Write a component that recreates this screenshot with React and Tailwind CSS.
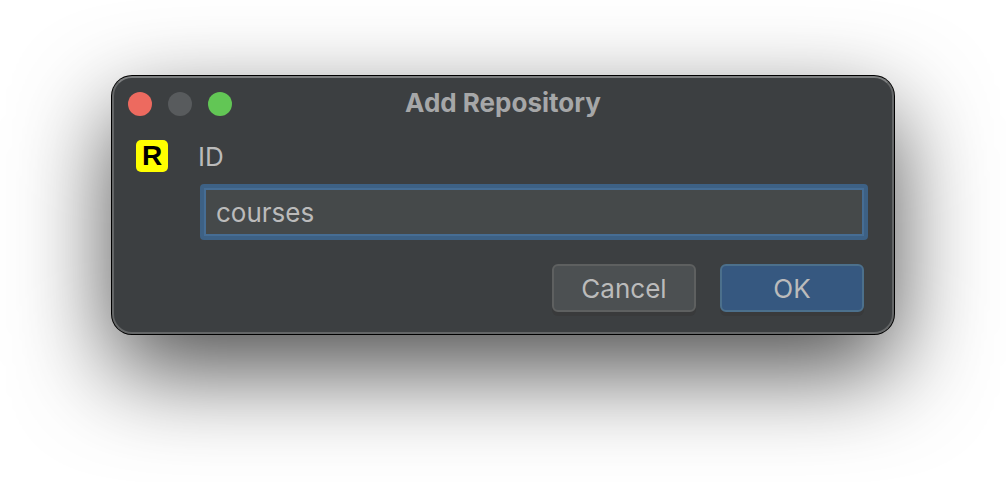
import { useState } from "react";

const lights = [
  { label: "Close", color: "bg-[#ed6a5f]" },
  { label: "Minimize", color: "bg-[#585b5d]" },
  { label: "Zoom", color: "bg-[#62c655]" },
];

function TitleBar({ title }) {
  return (
    <header className="grid h-[52px] grid-cols-[1fr_auto_1fr] items-center px-3.5">
      <div className="flex gap-4">
        {lights.map((light) => (
          <button
            key={light.label}
            type="button"
            aria-label={light.label}
            className={`size-6 rounded-full ${light.color}`}
          />
        ))}
      </div>
      <h1 className="pb-0.5 text-[26px] leading-8 font-bold text-[#a6a7a8]">{title}</h1>
    </header>
  );
}

function RepositoryIcon() {
  return (
    <span className="flex size-8 items-center justify-center rounded-[5px] bg-[#ffff00] font-['Liberation_Sans',Arial,sans-serif] text-[28px] leading-8 font-bold text-black">
      R
    </span>
  );
}

function DialogButton({ primary, children, ...props }) {
  const tone = primary
    ? "border-[#4c708c] bg-[#365880]"
    : "border-[#5e6060] bg-[#4c5052]";
  return (
    <button
      className={`h-12 w-36 rounded-md border-2 pt-0.5 shadow-[0_4px_0_rgba(54,54,54,0.5)] ${tone}`}
      {...props}
    >
      {children}
    </button>
  );
}

export default function App() {
  const [id, setId] = useState("courses");

  return (
    <main className="min-h-screen overflow-hidden bg-white px-28 pt-[76px] pb-28 font-['Inter',sans-serif] text-[26px] leading-8 text-[#bbbbbb]">
      <section
        role="dialog"
        aria-label="Add Repository"
        className="rounded-[20px] border-2 border-[#646667] border-t-[#7c7e7f] bg-[#3c3f41] shadow-[0_0_0_1px_#000,0_36px_96px_rgba(0,0,0,0.7)]"
      >
        <TitleBar title="Add Repository" />
        <form className="pt-2.5 pr-6 pb-5 pl-[22px]" onSubmit={(e) => e.preventDefault()}>
          <div className="grid grid-cols-[62px_1fr] grid-rows-[32px_auto] gap-y-3">
            <RepositoryIcon />
            <label htmlFor="repository-id" className="pt-px">
              ID
            </label>
            <div className="col-start-2 pl-0.5">
              <input
                id="repository-id"
                type="text"
                value={id}
                onChange={(e) => setId(e.target.value)}
                className="block h-14 w-full rounded border-4 border-[#3d6185] bg-[#45494a] px-3 shadow-[inset_0_0_0_2px_#466d94] outline-none"
              />
            </div>
          </div>
          <div className="mt-6 flex justify-end gap-6 pr-1">
            <DialogButton type="button">Cancel</DialogButton>
            <DialogButton type="submit" primary>
              OK
            </DialogButton>
          </div>
        </form>
      </section>
    </main>
  );
}
